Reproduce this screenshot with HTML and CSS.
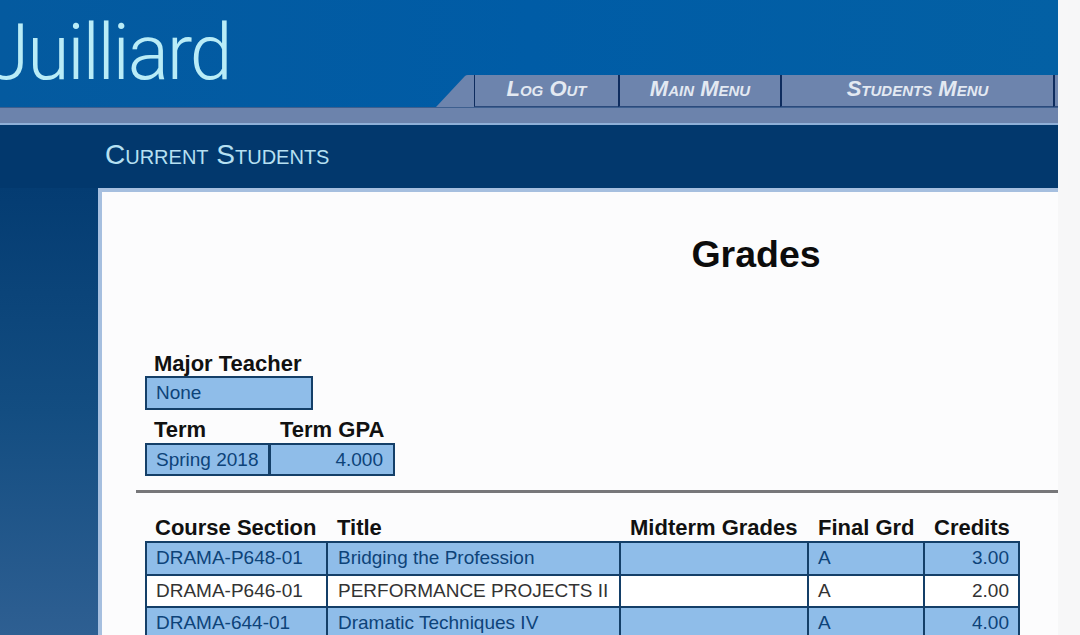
FILE: index.html
```html
<!DOCTYPE html>
<html lang="en">
<head>
    <meta charset="UTF-8">
    <meta name="viewport" content="width=device-width, initial-scale=1.0">
    <title>Juilliard - Grades</title>
    <link rel="stylesheet" href="styles.css">
</head>
<body>

    <div class="site">
        <header class="masthead">
            <div class="logo">Juilliard</div>
            <nav class="tabs">
                <svg class="tab-corner" width="39" height="32" viewBox="0 0 39 32" aria-hidden="true">
                    <path d="M0 32 L29 1 Q30 0 32 0 L39 0 L39 32 Z" fill="#6d84ad"/>
                </svg>
                <a class="tab tab-logout">Log Out</a>
                <a class="tab tab-main">Main Menu</a>
                <a class="tab tab-students">Students Menu</a>
                <a class="tab tab-end"></a>
            </nav>
        </header>
        <div class="strip"></div>

        <div class="section-bar">
            <div class="section-title">Current Students</div>
        </div>

        <div class="body-row">
            <main class="sheet">
                <h1>Grades</h1>

                <div class="info">
                    <div class="label">Major Teacher</div>
                    <div class="box teacher-box">None</div>

                    <div class="term-labels">
                        <div class="label term-label">Term</div>
                        <div class="label">Term GPA</div>
                    </div>
                    <div class="term-row">
                        <div class="box term-box">Spring 2018</div>
                        <div class="box gpa-box">4.000</div>
                    </div>
                </div>

                <hr class="rule">

                <table class="grades">
                    <thead>
                        <tr>
                            <th class="c-section">Course Section</th>
                            <th class="c-title">Title</th>
                            <th class="c-mid">Midterm Grades</th>
                            <th class="c-final">Final Grd</th>
                            <th class="c-credits">Credits</th>
                        </tr>
                    </thead>
                    <tbody>
                        <tr class="odd">
                            <td>DRAMA-P648-01</td>
                            <td>Bridging the Profession</td>
                            <td></td>
                            <td>A</td>
                            <td class="num">3.00</td>
                        </tr>
                        <tr>
                            <td>DRAMA-P646-01</td>
                            <td>PERFORMANCE PROJECTS II</td>
                            <td></td>
                            <td>A</td>
                            <td class="num">2.00</td>
                        </tr>
                        <tr class="odd">
                            <td>DRAMA-644-01</td>
                            <td>Dramatic Techniques IV</td>
                            <td></td>
                            <td>A</td>
                            <td class="num">4.00</td>
                        </tr>
                    </tbody>
                </table>
            </main>
        </div>
    </div>

</body>
</html>
```

FILE: styles.css
```css
html, body {
    margin: 0;
    height: 100%;
    overflow: hidden;
    background-color: #f7f7f8;
}
body {
    font-family: "Liberation Sans", Arial, sans-serif;
}
.site {
    width: 1058px;
    height: 635px;
    overflow: hidden;
}

/* top blue band */
.masthead {
    height: 108px;
    display: flex;
    justify-content: space-between;
    align-items: flex-end;
    background: linear-gradient(90deg, #045a9f 0%, #005ca6 50%, #0360a4 100%);
    border-bottom: 1px solid #3d5f8f;
    box-sizing: border-box;
    overflow: hidden;
}
.logo {
    font-family: Roboto, "Liberation Sans", sans-serif;
    font-size: 77px;
    font-weight: 300;
    line-height: 90px;
    letter-spacing: -2.2px;
    color: #b9ecf7;
    margin-left: -13px;
    margin-bottom: 9px;
}
.tabs {
    display: flex;
    align-items: flex-end;
    height: 32px;
}
.tab-corner {
    display: block;
    margin-right: -1px;
}
.tab {
    height: 32px;
    box-sizing: border-box;
    background-color: #6d84ad;
    border-left: 2px solid #0e2c5e;
    border-bottom: 1px solid #2b4a7c;
    color: #e3e9f2;
    font-size: 22px;
    font-style: italic;
    font-weight: bold;
    font-variant: small-caps;
    line-height: 27px;
    text-align: center;
    white-space: nowrap;
}
.tab-logout { width: 144px; border-left-width: 1px; }
.tab-main { width: 162px; }
.tab-students { width: 273px; }
.tab-end { width: 5px; }

.strip {
    height: 17px;
    background-color: #6c83ac;
    border-bottom: 2px solid #8fb0d8;
    box-sizing: border-box;
}

.section-bar {
    height: 63px;
    background-color: #02386d;
    box-sizing: border-box;
    padding-left: 105px;
}
.section-title {
    color: #b6e0f2;
    font-size: 28px;
    line-height: 59px;
    font-variant: small-caps;
}

.body-row {
    height: 447px;
    padding-left: 98px;
    background: linear-gradient(180deg, #043c72 0%, #134d81 50%, #2e5f92 100%);
}

/* white page */
.sheet {
    height: 447px;
    box-sizing: border-box;
    background-color: #fcfcfd;
    border-top: 4px solid #a6bfdf;
    border-left: 4px solid #a6bfdf;
    padding-top: 40px;
}
h1 {
    margin: 0;
    font-size: 37.5px;
    line-height: 44px;
    font-weight: bold;
    color: #0c0c0c;
    text-align: center;
    padding-left: 348px;
    width: 612px;
}

.info {
    margin-top: 76px;
    margin-left: 43px;
}
.label {
    font-size: 22px;
    font-weight: bold;
    color: #111;
    line-height: 24px;
    padding-left: 9px;
}
.box {
    box-sizing: border-box;
    border: 2px solid #143f68;
    background-color: #8fbde9;
    color: #0d4379;
    font-size: 19px;
    line-height: 30px;
    padding-left: 9px;
}
.teacher-box {
    width: 168px;
    height: 34px;
    margin-bottom: 8px;
}
.term-labels {
    display: flex;
}
.term-label {
    width: 126px;
    box-sizing: border-box;
}
.term-row {
    display: flex;
    margin-top: 1px;
}
.term-box {
    width: 125px;
    height: 33px;
    white-space: nowrap;
}
.gpa-box {
    width: 126px;
    height: 33px;
    margin-left: -1px;
    text-align: right;
    padding-right: 10px;
}

.rule {
    margin: 14px 0 0 34px;
    height: 3px;
    border: 0;
    background-color: #77777a;
}

/* grades table */
.grades {
    margin-top: 22px;
    margin-left: 43px;
    border-collapse: collapse;
    table-layout: fixed;
    width: 873px;
}
.grades th {
    box-sizing: border-box;
    font-size: 22px;
    line-height: 24px;
    color: #111;
    text-align: left;
    padding: 1px 0 1px 10px;
    white-space: nowrap;
}
.grades th.c-section {
    padding-left: 9px;
}
.grades td {
    border: 2px solid #143f68;
    color: #333;
    font-size: 19px;
    line-height: 30.5px;
    padding: 0 9px;
    height: 30.5px;
    white-space: nowrap;
    background-color: #fff;
}
.grades td:nth-child(2) {
    padding-left: 10px;
}
.grades .odd td {
    background-color: #8fbde9;
    color: #0d4379;
}
.grades .num {
    text-align: right;
}
.c-section { width: 181px; }
.c-title { width: 293px; }
.c-mid { width: 188px; }
.c-final { width: 116px; }
.c-credits { width: 95px; }
```
